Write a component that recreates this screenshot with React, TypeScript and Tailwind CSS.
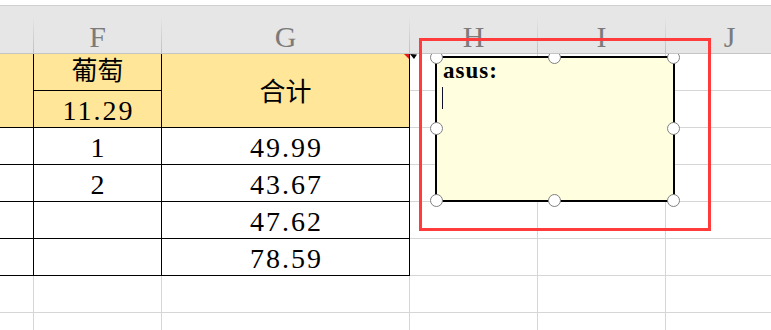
const cols = [
  { key: 'E', w: 'w-[34px]' },
  { key: 'F', w: 'w-[128px]' },
  { key: 'G', w: 'w-[248px]' },
  { key: 'H', w: 'w-[128px]' },
  { key: 'I', w: 'w-[128px]' },
  { key: 'J', w: 'w-[128px]' },
];

const rows = [
  { f: '1', g: '49.99' },
  { f: '2', g: '43.67' },
  { f: '', g: '47.62' },
  { f: '', g: '78.59' },
];

const black = 'border-r border-b border-black flex items-center justify-center';
const gray = 'border-r border-b border-[#d6d6d6]';
const num = 'text-[28px] leading-none tracking-[2px] pt-[3px] pl-[2px]';
const cjk = 'text-[26px] leading-none';

const handles = [
  'left-[430px] top-[51px]',
  'left-[548px] top-[51px]',
  'left-[667px] top-[51px]',
  'left-[430px] top-[122px]',
  'left-[667px] top-[122px]',
  'left-[430px] top-[194px]',
  'left-[548px] top-[194px]',
  'left-[667px] top-[194px]',
];

function GrayCells({ n }: { n: number }) {
  return (
    <>
      {Array.from({ length: n }).map((_, i) => (
        <div key={i} className={gray} />
      ))}
    </>
  );
}

export default function App() {
  return (
    <div className="relative w-[771px] h-[330px] overflow-hidden bg-white text-black font-['Liberation_Serif','Noto_Sans_CJK_SC',serif]">
      <div className="h-[5px]" />

      {/* column header */}
      <div className="relative z-20 flex h-[49px] border-t border-b border-t-[#d0d0d0] border-b-[#c4c4c4] bg-[#e6e6e6]">
        {cols.map((c) => (
          <div key={c.key} className={`${c.w} shrink-0 flex items-end`}>
            <div className="flex-1 text-center text-[30px] leading-[30px] mb-[1px] text-[#7b7b7b]">
              {c.key === 'E' ? '' : c.key}
            </div>
            <div className="w-px h-[36px] bg-linear-to-b from-[#e6e6e6] to-[#c0c0c0]" />
          </div>
        ))}
      </div>

      {/* sheet */}
      <div className="grid grid-cols-[34px_128px_248px_128px_128px_128px] auto-rows-[37px]">
        <div className={`${black} row-span-2 bg-[#ffe699]`} />
        <div className={`${black} bg-[#ffe699]`}>
          <span className={cjk}>葡萄</span>
        </div>
        <div className={`${black} relative row-span-2 bg-[#ffe699]`}>
          <span className={`${cjk} pt-[4px]`}>合计</span>
          <svg className="absolute top-0 right-0" width="5" height="5" viewBox="0 0 5 5">
            <polygon points="0,0 5,0 5,5" fill="#e8171d" />
          </svg>
        </div>
        <GrayCells n={3} />

        <div className={`${black} bg-[#ffe699]`}>
          <span className={num}>11.29</span>
        </div>
        <GrayCells n={3} />

        {rows.map((r) => (
          <div key={r.g} className="contents">
            <div className={black} />
            <div className={black}>
              <span className={num}>{r.f}</span>
            </div>
            <div className={black}>
              <span className={num}>{r.g}</span>
            </div>
            <GrayCells n={3} />
          </div>
        ))}

        <GrayCells n={12} />
      </div>

      {/* comment */}
      <svg className="absolute left-[410px] top-[54px] z-10" width="9" height="6" viewBox="0 0 9 6">
        <polygon points="0,0 7,0.5 4,5" fill="#000" />
      </svg>
      <div className="absolute left-[435px] top-[56px] z-10 w-[240px] h-[146px] border-2 border-black bg-[#ffffe0] pl-[6px] pt-[1px]">
        <div className="text-[23px] leading-[24px] font-bold tracking-[1px]">asus:</div>
        <div className="w-px h-[22px] bg-[#101030] -ml-px mt-[4px]" />
      </div>
      {handles.map((h) => (
        <div
          key={h}
          className={`absolute ${h} z-10 w-[13px] h-[13px] rounded-full bg-white border border-[#7f7f7f]`}
        />
      ))}

      {/* highlight */}
      <div className="absolute left-[419px] top-[38px] z-30 w-[292px] h-[193px] border-[3px] border-[#ff3b3b]" />
    </div>
  );
}
